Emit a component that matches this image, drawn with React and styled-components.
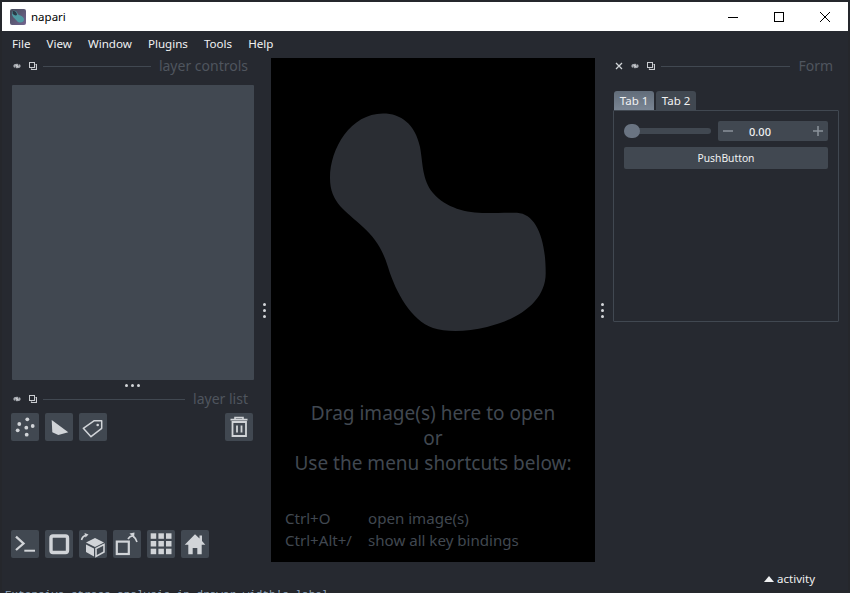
import React from 'react';
import styled, { createGlobalStyle } from 'styled-components';

const Global = createGlobalStyle`
  html, body { margin: 0; padding: 0; background: #24262b; }
  #root { width: 850px; height: 593px; overflow: hidden; }
  * { box-sizing: border-box; }
`;

const FONT = `"Noto Sans", "Open Sans", "Liberation Sans", sans-serif`;

const Desktop = styled.div`
  position: relative;
  width: 850px;
  height: 593px;
  padding: 2px 2px 3px 2px;
  overflow: hidden;
  background: #25272c;
  font-family: ${FONT};
`;
const BehindText = styled.div`
  position: absolute;
  left: 5px;
  top: 589px;
  font: 11px "Liberation Mono", monospace;
  color: #8fa6bd;
  white-space: nowrap;
`;
const Window = styled.div`
  position: relative;
  display: flex;
  flex-direction: column;
  height: 100%;
  background: #262930;
  color: #f0f1f2;
`;
const TitleBar = styled.div`
  display: flex;
  align-items: center;
  height: 29px;
  flex: none;
  background: #fff;
  color: #000;
  padding-left: 8px;
  font-size: 11.5px;
`;
const Title = styled.span`
  margin-left: 5px;
  flex: 1;
`;
const WinButton = styled.div`
  width: 46px;
  height: 29px;
  display: flex;
  align-items: center;
  justify-content: center;
`;
const MenuBar = styled.div`
  display: flex;
  align-items: center;
  gap: 16px;
  height: 27px;
  flex: none;
  padding: 0 0 3px 10px;
  font-size: 11.6px;
`;
const Body = styled.div`
  display: flex;
  flex: 1;
  min-height: 0;
`;
const LeftDock = styled.div`
  width: 260px;
  flex: none;
  display: flex;
  flex-direction: column;
  padding: 0 8px 4px 10px;
`;
const DockHeader = styled.div`
  display: flex;
  align-items: center;
  height: ${p => p.$h}px;
  margin-bottom: ${p => p.$mb || 0}px;
  padding-left: ${p => p.$pl || 1}px;
  flex: none;
  gap: 8px;
`;
const HeaderLine = styled.div`
  flex: 1;
  height: 1px;
  background: #414851;
  margin-left: -2px;
`;
const HeaderLabel = styled.span`
  font-size: 14px;
  line-height: 18px;
  color: #4f555e;
  margin-right: 6px;
  white-space: nowrap;
`;
const ControlsPanel = styled.div`
  height: 295px;
  flex: none;
  background: #414851;
  border-radius: 1px;
`;
const HorizontalHandle = styled.div`
  height: 10px;
  flex: none;
  display: flex;
  align-items: center;
  justify-content: center;
  gap: 3px;
  padding-right: 2px;
`;
const VerticalHandle = styled.div`
  width: ${p => p.$w}px;
  flex: none;
  display: flex;
  flex-direction: column;
  align-items: ${p => p.$align};
  justify-content: center;
  gap: 3px;
  padding: 0 ${p => p.$pad}px;
`;
const Dot = styled.i`
  display: block;
  width: 3px;
  height: 3px;
  border-radius: 50%;
  background: #d4d6d9;
`;
const ButtonRow = styled.div`
  display: flex;
  gap: 6px;
  margin: 5px 1px 0 -1px;
`;
const Spacer = styled.div`
  flex: 1;
`;
const IconButton = styled.div`
  width: 28px;
  height: 28px;
  flex: none;
  border-radius: 2px;
  background: #414851;
  svg { display: block; }
`;
const Canvas = styled.div`
  width: 324px;
  flex: none;
  background: #000;
  color: #414851;
  display: flex;
  flex-direction: column;
  overflow: hidden;
  svg { display: block; flex: none; }
`;
const WelcomeText = styled.div`
  text-align: center;
  font-size: 19px;
  line-height: 25px;
`;
const Shortcuts = styled.div`
  display: grid;
  grid-template-columns: 83px auto;
  justify-content: start;
  padding: 31px 0 0 14px;
  font-size: 15.1px;
  line-height: 22px;
`;
const RightDock = styled.div`
  flex: 1;
  display: flex;
  flex-direction: column;
  padding: 0 9px 0 4px;
  min-width: 0;
`;
const TabBar = styled.div`
  display: flex;
  gap: 2px;
  margin-left: 1px;
  height: 19px;
  flex: none;
`;
const Tab = styled.div`
  width: 40px;
  text-align: center;
  font-size: 11.5px;
  line-height: 19px;
  border-radius: 3px 3px 0 0;
  background: ${p => (p.$active ? 'linear-gradient(#626d7a,#7a8593)' : '#414851')};
`;
const TabFrame = styled.div`
  height: 212px;
  flex: none;
  border: 1px solid #414851;
  border-radius: 1px;
  padding: 10px 10px 0 10px;
  display: flex;
  flex-direction: column;
  gap: 6px;
`;
const SliderRow = styled.div`
  display: flex;
  align-items: center;
  gap: 7px;
  height: 20px;
`;
const SliderTrack = styled.div`
  position: relative;
  flex: 1;
  height: 6px;
  margin-top: -1px;
  border-radius: 3px;
  background: #414851;
`;
const SliderThumb = styled.div`
  position: absolute;
  left: 0;
  top: -4px;
  width: 16px;
  height: 14px;
  border-radius: 7px;
  background: #6a7482;
`;
const SpinBox = styled.div`
  width: 110px;
  height: 20px;
  flex: none;
  display: flex;
  align-items: center;
  justify-content: space-between;
  padding: 0 4px;
  border-radius: 2px;
  background: #414851;
  font-size: 11px;
  font-weight: 500;
`;
const SpinValue = styled.span`
  margin-right: 26px;
`;
const PushButton = styled.div`
  height: 22px;
  border-radius: 2px;
  background: #414851;
  text-align: center;
  font-size: 10.3px;
  line-height: 22px;
`;
const StatusBar = styled.div`
  height: 28px;
  flex: none;
  display: flex;
  align-items: center;
  justify-content: flex-end;
  gap: 3px;
  padding: 5px 33px 0 0;
  font-size: 11.5px;
`;

const c = '#d1d4d8';

const EyeIcon = () => (
  <svg width="8" height="8" viewBox="0 0 8 8">
    <ellipse cx="4" cy="4" rx="3.6" ry="2.2" fill="#a7abb1" />
    <path d="M1.5 6 L6.5 2" stroke="#262930" strokeWidth="1" />
    <circle cx="4" cy="4" r="1" fill="#e0e1e3" />
  </svg>
);
const FloatIcon = () => (
  <svg width="8" height="8" viewBox="0 0 8 8" fill="none" stroke="#c9ccd0" strokeWidth="1">
    <rect x="0.5" y="0.5" width="5" height="5" />
    <path d="M6.5 2.5 H7.5 V7.5 H2.5 V6.5" strokeWidth="1.2" />
  </svg>
);
const CloseIcon = () => (
  <svg width="8" height="8" viewBox="0 0 8 8" stroke="#d1d4d8" strokeWidth="1.3">
    <path d="M1 1 L7 7 M7 1 L1 7" />
  </svg>
);

const AppLogo = () => (
  <svg width="16" height="16" viewBox="0 0 16 16">
    <defs>
      <linearGradient id="lg" x1="0" y1="0" x2="1" y2="1">
        <stop offset="0" stopColor="#454c5a" />
        <stop offset="1" stopColor="#746690" />
      </linearGradient>
    </defs>
    <rect width="16" height="16" rx="2" fill="url(#lg)" />
    <path d="M3 2 C6 1 7.5 3.5 8 5.5 C9.5 6.5 14 7 14 10.5 C14 14 9 14.5 7 12 C5 9.5 1.5 7.5 2 4 Z" fill="#4f9aa3" />
    <path d="M3 2 C5.5 1.5 7 3.5 7 6 C5.5 7 3.5 6 2.5 4.5 Z" fill="#2b3a47" />
  </svg>
);

const Svg28 = ({ children }) => (
  <svg width="28" height="28" viewBox="0 0 28 28">{children}</svg>
);
const PointsIcon = () => (
  <Svg28>
    {[[16.3, 6.3], [8.3, 11], [21.7, 13], [15.3, 14.7], [6.7, 17.3], [15.7, 21.7]].map(([x, y]) => (
      <circle key={x} cx={x} cy={y} r="1.9" fill={c} />
    ))}
  </Svg28>
);
const ShapesIcon = () => (
  <Svg28><path d="M6.7 7 L23.3 19.3 L13.3 22 L7.3 19.3 Z" fill={c} /></Svg28>
);
const LabelsIcon = () => (
  <Svg28>
    <path d="M15.3 7.7 H22.7 V15.3 L12 23.7 L4.3 15.3 Z" fill="none" stroke={c} strokeWidth="1.5" strokeLinejoin="round" />
    <circle cx="18.7" cy="12" r="1.3" fill={c} />
  </Svg28>
);
const TrashIcon = () => (
  <Svg28>
    <path d="M10 6 V4.5 H18 V6 M5.5 6.6 H22.5" fill="none" stroke={c} strokeWidth="1.6" />
    <path d="M7.5 9 H21 V23 H7.5 Z" fill="none" stroke={c} strokeWidth="1.8" />
    <path d="M12 12.5 V19.5 M16.5 12.5 V19.5" stroke={c} strokeWidth="1.8" />
  </Svg28>
);
const ConsoleIcon = () => (
  <Svg28>
    <path d="M5 6.7 L12.5 13.5 L5 20" fill="none" stroke={c} strokeWidth="2.3" />
    <path d="M13.3 20.7 H24" stroke={c} strokeWidth="2" />
  </Svg28>
);
const SquareIcon = () => (
  <Svg28><rect x="6" y="6" width="16.5" height="16.5" rx="2" fill="none" stroke={c} strokeWidth="3.4" /></Svg28>
);
const CubeIcon = () => (
  <Svg28>
    <path d="M2.5 10 C3 7.5 4.5 6 6.5 5.2" fill="none" stroke={c} strokeWidth="1.5" />
    <path d="M5.5 3 L9.5 4.5 L6.5 7.5 Z" fill={c} />
    <path d="M16 8 L25 12.5 L16 17 L7 12.5 Z" fill={c} />
    <path d="M7 14.5 L15 18.5 V26.5 L7 22 Z" fill={c} />
    <path d="M25 14.5 L17 18.5 V26.5 L25 22 Z" fill="none" stroke={c} strokeWidth="1.6" />
  </Svg28>
);
const RollIcon = () => (
  <Svg28>
    <rect x="3.8" y="11.6" width="12" height="12.4" fill="none" stroke={c} strokeWidth="2.2" />
    <path d="M15 9 C16.5 6.5 18 5.8 20 6 C21.5 7 23 9.5 24 12" fill="none" stroke={c} strokeWidth="1.6" />
    <path d="M16.5 3.5 L21.5 2.5 L21 8 Z" fill={c} />
  </Svg28>
);
const GridIcon = () => (
  <Svg28>
    {[3.7, 11.4, 19].flatMap(x =>
      [3.3, 11, 18.7].map(y => <rect key={`${x}-${y}`} x={x} y={y} width="5.5" height="5.5" fill={c} />)
    )}
  </Svg28>
);
const HomeIcon = () => (
  <Svg28>
    <path d="M14 4.3 L18.5 8.5 V5.5 H21 V11 L24.3 14.8 H20.7 V24.3 H16.3 V18 H11.7 V24.3 H7.3 V14.8 H3.7 Z" fill={c} />
  </Svg28>
);

const BLOB = 'M112 55.5 C130 55.5 144 66 149 89 C152 105 151 122 162 135 C175 150 195 155 215 155 C225 155 240 154.5 246 154.7 C265 156 274.7 180 274.7 215 C274.7 245 245 262 216 269 C195 274 175 274 162 270 C140 262 125 235 117 209 C111 190 104 180 92 169 C75 153 59 145 59 120 C59 90 80 55.5 112 55.5 Z';

const Dots = () => (<><Dot /><Dot /><Dot /></>);

export default function App() {
  return (
    <Desktop>
      <Global />
      <BehindText>Extensive stress analysis in drawer width's label</BehindText>
      <Window>
        <TitleBar>
          <AppLogo />
          <Title>napari</Title>
          <WinButton>
            <svg width="10" height="10" viewBox="0 0 10 10"><path d="M0 5.5 H10" stroke="#000" /></svg>
          </WinButton>
          <WinButton>
            <svg width="10" height="10" viewBox="0 0 10 10"><rect x=".5" y=".5" width="9" height="9" fill="none" stroke="#000" /></svg>
          </WinButton>
          <WinButton>
            <svg width="10" height="10" viewBox="0 0 10 10"><path d="M0 0 L10 10 M10 0 L0 10" stroke="#000" /></svg>
          </WinButton>
        </TitleBar>
        <MenuBar>
          <span>File</span><span>View</span><span>Window</span><span>Plugins</span><span>Tools</span><span>Help</span>
        </MenuBar>
        <Body>
          <LeftDock>
            <DockHeader $h={16} $mb={11}>
              <EyeIcon /><FloatIcon />
              <HeaderLine />
              <HeaderLabel>layer controls</HeaderLabel>
            </DockHeader>
            <ControlsPanel />
            <HorizontalHandle><Dots /></HorizontalHandle>
            <DockHeader $h={18}>
              <EyeIcon /><FloatIcon />
              <HeaderLine />
              <HeaderLabel>layer list</HeaderLabel>
            </DockHeader>
            <ButtonRow>
              <IconButton><PointsIcon /></IconButton>
              <IconButton><ShapesIcon /></IconButton>
              <IconButton><LabelsIcon /></IconButton>
              <Spacer />
              <IconButton><TrashIcon /></IconButton>
            </ButtonRow>
            <Spacer />
            <ButtonRow>
              <IconButton><ConsoleIcon /></IconButton>
              <IconButton><SquareIcon /></IconButton>
              <IconButton><CubeIcon /></IconButton>
              <IconButton><RollIcon /></IconButton>
              <IconButton><GridIcon /></IconButton>
              <IconButton><HomeIcon /></IconButton>
            </ButtonRow>
          </LeftDock>
          <VerticalHandle $w={9} $align="flex-start" $pad={1}><Dots /></VerticalHandle>
          <Canvas>
            <svg width="324" height="343" viewBox="0 0 324 343">
              <path d={BLOB} fill="#2a2d33" />
            </svg>
            <WelcomeText>
              Drag image(s) here to open<br />or<br />Use the menu shortcuts below:
            </WelcomeText>
            <Shortcuts>
              <span>Ctrl+O</span><span>open image(s)</span>
              <span>Ctrl+Alt+/</span><span>show all key bindings</span>
            </Shortcuts>
          </Canvas>
          <VerticalHandle $w={14} $align="center" $pad={0}><Dots /></VerticalHandle>
          <RightDock>
            <DockHeader $h={16} $mb={17} $pl={2}>
              <CloseIcon /><EyeIcon /><FloatIcon />
              <HeaderLine />
              <HeaderLabel>Form</HeaderLabel>
            </DockHeader>
            <TabBar>
              <Tab $active>Tab 1</Tab>
              <Tab>Tab 2</Tab>
            </TabBar>
            <TabFrame>
              <SliderRow>
                <SliderTrack><SliderThumb /></SliderTrack>
                <SpinBox>
                  <svg width="12" height="12" viewBox="0 0 12 12"><path d="M1 6 H11" stroke="#8b929b" strokeWidth="1.5" /></svg>
                  <SpinValue>0.00</SpinValue>
                  <svg width="12" height="12" viewBox="0 0 12 12"><path d="M1 6 H11 M6 1 V11" stroke="#8b929b" strokeWidth="1.5" /></svg>
                </SpinBox>
              </SliderRow>
              <PushButton>PushButton</PushButton>
            </TabFrame>
          </RightDock>
        </Body>
        <StatusBar>
          <svg width="10" height="6" viewBox="0 0 10 6"><path d="M5 0 L10 6 H0 Z" fill="#f0f1f2" /></svg>
          <span>activity</span>
        </StatusBar>
      </Window>
    </Desktop>
  );
}
